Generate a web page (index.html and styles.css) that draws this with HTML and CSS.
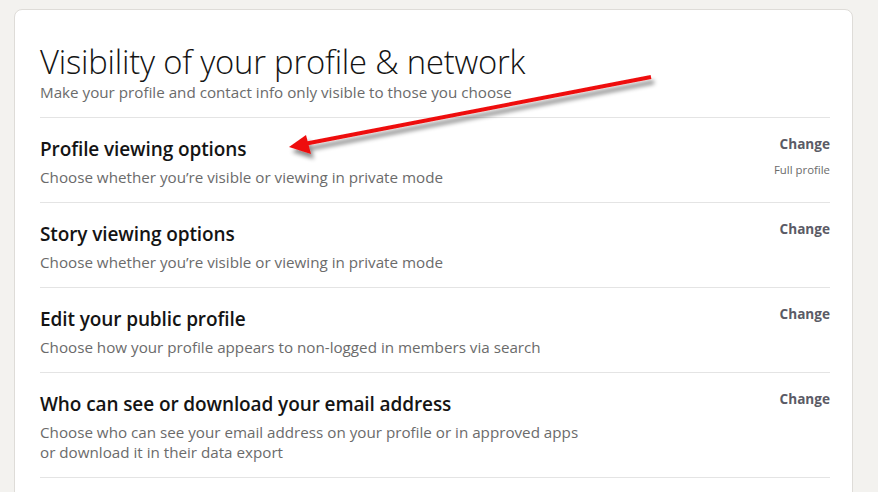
FILE: index.html
```html
<!DOCTYPE html>
<html lang="en">
<head>
    <meta charset="UTF-8">
    <title>Visibility settings</title>
    <link rel="stylesheet" href="styles.css">
</head>
<body>

<!-- Settings card -->
<div class="card">
    <h1>Visibility of your profile &amp; network</h1>
    <p class="lead">Make your profile and contact info only visible to those you choose</p>

    <ul class="settings">
        <li class="row">
            <div class="info">
                <h3>Profile viewing options</h3>
                <p>Choose whether you’re visible or viewing in private mode</p>
            </div>
            <div class="action">
                <a href="#">Change</a>
                <span class="state">Full profile</span>
            </div>
        </li>
        <li class="row">
            <div class="info">
                <h3>Story viewing options</h3>
                <p>Choose whether you’re visible or viewing in private mode</p>
            </div>
            <div class="action">
                <a href="#">Change</a>
            </div>
        </li>
        <li class="row">
            <div class="info">
                <h3>Edit your public profile</h3>
                <p>Choose how your profile appears to non-logged in members via search</p>
            </div>
            <div class="action">
                <a href="#">Change</a>
            </div>
        </li>
        <li class="row">
            <div class="info">
                <h3>Who can see or download your email address</h3>
                <p>Choose who can see your email address on your profile or in approved apps<br>or download it in their data export</p>
            </div>
            <div class="action">
                <a href="#">Change</a>
            </div>
        </li>
    </ul>
</div>

<!-- Red annotation arrow -->
<svg class="arrow" width="878" height="492" viewBox="0 0 878 492">
    <defs>
        <filter id="shade" x="-10%" y="-50%" width="120%" height="200%">
            <feDropShadow dx="3" dy="5" stdDeviation="2" flood-color="#000" flood-opacity="0.45"/>
        </filter>
    </defs>
    <g filter="url(#shade)">
        <line x1="651" y1="77" x2="304" y2="144" stroke="#ee1111" stroke-width="4"/>
        <polygon points="289,147 306,135 311,154" fill="#ee1111"/>
    </g>
</svg>

</body>
</html>
```

FILE: styles.css
```css
* {
    box-sizing: border-box;
}

body {
    margin: 0;
    padding: 9px 25px 0 14px;
    background-color: #f3f2ef;
    font-family: 'Open Sans', 'Noto Sans', sans-serif;
    color: rgba(0,0,0,0.9);
    overflow: hidden;
}

.card {
    background: #ffffff;
    border: 1px solid #dedcd8;
    border-radius: 8px;
    padding: 32px 22px 0 25px;
    min-height: 520px;
}

h1 {
    margin: 0;
    font-size: 32.8px;
    font-weight: 300;
    line-height: 40px;
    letter-spacing: -0.2px;
    color: #141414;
}

.lead {
    margin: 0;
    font-size: 15.2px;
    line-height: 20px;
    color: #6b6b6b;
}

.settings {
    list-style: none;
    margin: 0;
    padding: 0;
    border-top: 1px solid #e4e4e4;
    margin-top: 15px;
}

.row {
    display: flex;
    justify-content: space-between;
    align-items: flex-start;
    border-bottom: 1px solid #e4e4e4;
    padding: 19px 0 15px 0;
}

.info h3 {
    margin: 0;
    font-size: 19px;
    font-weight: 600;
    line-height: 24px;
    letter-spacing: -0.1px;
    color: #141414;
}

.info p {
    margin: 6px 0 0 0;
    font-size: 15.2px;
    line-height: 20px;
    color: #6b6b6b;
}

.action {
    display: flex;
    flex-direction: column;
    align-items: flex-end;
    margin-top: -3px;
}

.action a {
    font-size: 13.6px;
    font-weight: 700;
    line-height: 20px;
    color: #5b5b66;
    text-decoration: none;
}

.state {
    margin-top: 9px;
    font-size: 11.4px;
    line-height: 14px;
    color: #6b6b6b;
}

.arrow {
    position: absolute;
    top: 0;
    left: 0;
    pointer-events: none;
}
```
